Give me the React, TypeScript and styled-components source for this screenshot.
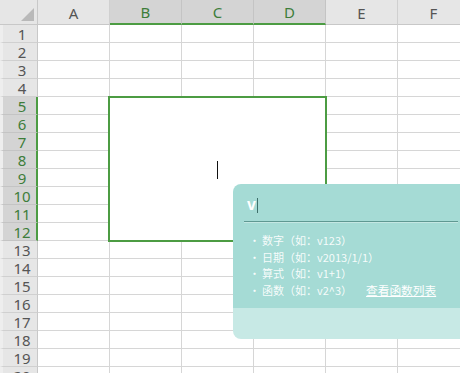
import styled, { createGlobalStyle } from 'styled-components';

const GlobalStyle = createGlobalStyle`
  html, body {
    margin: 0;
    padding: 0;
    background: #fff;
    overflow: hidden;
  }
  body {
    width: 460px;
    height: 373px;
    font-family: "Noto Sans", "Noto Sans CJK SC", sans-serif;
  }
`;

const COLS = ['A', 'B', 'C', 'D', 'E', 'F'];
const ROWS = Array.from({ length: 20 }, (_, i) => i + 1);
const GREEN = '#4c9c43';
const GRID = '#d6d6d6';

const Page = styled.div`
  position: relative;
  width: 460px;
  height: 373px;
  overflow: hidden;
`;

const Sheet = styled.div`
  display: grid;
  grid-template-columns: 38px repeat(6, 72px);
  grid-template-rows: 25px repeat(20, 18px);
  width: 470px;
`;

const Corner = styled.div`
  background: #e6e6e6;
  border-right: 1px solid #c8c8c8;
  border-bottom: 1px solid #c8c8c8;
  box-sizing: border-box;
  display: flex;
  align-items: flex-end;
  justify-content: flex-end;
  padding: 0 3px 3px 0;
`;

const ColHeader = styled.div<{ $selected?: boolean }>`
  box-sizing: border-box;
  background: ${({ $selected }) => ($selected ? '#d4d4d4' : '#e6e6e6')};
  border-right: 1px solid ${({ $selected }) => ($selected ? '#c4c4c4' : '#d0d0d0')};
  border-bottom: ${({ $selected }) => ($selected ? `2px solid ${GREEN}` : '1px solid #c8c8c8')};
  color: ${({ $selected }) => ($selected ? '#3d7d3a' : '#555')};
  font-size: 15px;
  line-height: 20px;
  display: flex;
  align-items: center;
  justify-content: center;
  padding-top: 1px;
`;

const RowHeader = styled.div<{ $selected?: boolean }>`
  box-sizing: border-box;
  background: ${({ $selected }) => ($selected ? '#d4d4d4' : '#e6e6e6')};
  border-left: 3px solid #eeeeee;
  border-right: ${({ $selected }) => ($selected ? `2px solid ${GREEN}` : '1px solid #c8c8c8')};
  border-bottom: 1px solid ${({ $selected }) => ($selected ? '#c4c4c4' : '#d0d0d0')};
  color: ${({ $selected }) => ($selected ? '#3d7d3a' : '#555')};
  font-size: 15px;
  line-height: 16px;
  overflow: hidden;
  display: flex;
  align-items: center;
  justify-content: center;
  padding-left: ${({ $selected }) => ($selected ? '5px' : '4px')};
`;

const Cell = styled.div`
  box-sizing: border-box;
  border-right: 1px solid ${GRID};
  border-bottom: 1px solid ${GRID};
  background: #fff;
`;

const MergedCell = styled.div`
  grid-column: span 3;
  grid-row: span 8;
  margin: -1px -1px -1px -2px;
  border: 2px solid ${GREEN};
  background: #fff;
  display: flex;
  align-items: center;
  justify-content: center;
  position: relative;
  z-index: 1;
`;

const CellCaret = styled.span`
  display: block;
  width: 1px;
  height: 18px;
  background: #111;
  margin-top: 1px;
`;

const Popup = styled.div`
  position: absolute;
  left: 233px;
  top: 184px;
  width: 236px;
  height: 155px;
  border-radius: 8px;
  overflow: hidden;
  display: flex;
  flex-direction: column;
  z-index: 2;
  font-family: "Noto Sans CJK SC", "Noto Sans", sans-serif;
`;

const PopupBody = styled.div`
  height: 124px;
  background: #a5dbd5;
  box-sizing: border-box;
`;

const InputRow = styled.div`
  margin: 0 11px;
  height: 38px;
  box-sizing: border-box;
  border-bottom: 1px solid #5f9892;
  box-shadow: 0 1px 0 rgba(255, 255, 255, 0.35);
  display: flex;
  align-items: flex-end;
  padding: 0 0 8px 3px;
`;

const Typed = styled.span`
  color: #fff;
  font-family: "Liberation Sans", Arial, sans-serif;
  font-weight: bold;
  font-size: 16px;
  line-height: 16px;
`;

const InputCaret = styled.span`
  display: block;
  width: 1px;
  height: 15px;
  background: #3e6f6a;
  margin: 0 0 0 1px;
`;

const HintList = styled.ul`
  list-style: none;
  margin: 0;
  padding: 10px 0 0 16px;
`;

const HintItem = styled.li`
  display: flex;
  align-items: center;
  gap: 8px;
  height: 16.5px;
  color: rgba(255, 255, 255, 0.92);
  font-size: 11px;
  white-space: nowrap;
`;

const Bullet = styled.span`
  width: 5px;
  text-align: center;
`;

const HintLink = styled.a`
  color: #fff;
  font-size: 11.7px;
  text-decoration: underline;
  margin-left: 6px;
  cursor: pointer;
`;

const PopupFooter = styled.div`
  flex: 1;
  background: #c7e9e5;
`;

const hints = [
  '数字（如：v123）',
  '日期（如：v2013/1/1）',
  '算式（如：v1+1）',
  '函数（如：v2^3）',
];

function CornerMark() {
  return (
    <svg width="13" height="13" viewBox="0 0 13 13">
      <polygon points="13,0 13,13 0,13" fill="#b9b9b9" />
    </svg>
  );
}

export default function App() {
  const isSelCol = (c: number) => c >= 1 && c <= 3;
  const isSelRow = (r: number) => r >= 5 && r <= 12;

  return (
    <Page>
      <GlobalStyle />
      <Sheet>
        <Corner>
          <CornerMark />
        </Corner>
        {COLS.map((c, i) => (
          <ColHeader key={c} $selected={isSelCol(i)}>{c}</ColHeader>
        ))}
        {ROWS.map((r) => (
          <RowGroup key={r} row={r} selected={isSelRow(r)} />
        ))}
      </Sheet>

      <Popup>
        <PopupBody>
          <InputRow>
            <Typed>v</Typed>
            <InputCaret />
          </InputRow>
          <HintList>
            {hints.map((h, i) => (
              <HintItem key={h}>
                <Bullet>·</Bullet>
                <span>{h}</span>
                {i === hints.length - 1 && <HintLink>查看函数列表</HintLink>}
              </HintItem>
            ))}
          </HintList>
        </PopupBody>
        <PopupFooter />
      </Popup>
    </Page>
  );
}

function RowGroup({ row, selected }: { row: number, selected: boolean }) {
  return (
    <>
      <RowHeader $selected={selected}>{row}</RowHeader>
      {COLS.map((c, i) => {
        const inMerge = selected && i >= 1 && i <= 3;
        if (inMerge) {
          if (row === 5 && i === 1) {
            return (
              <MergedCell key={c}>
                <CellCaret />
              </MergedCell>
            );
          }
          return null;
        }
        return <Cell key={c} />;
      })}
    </>
  );
}
